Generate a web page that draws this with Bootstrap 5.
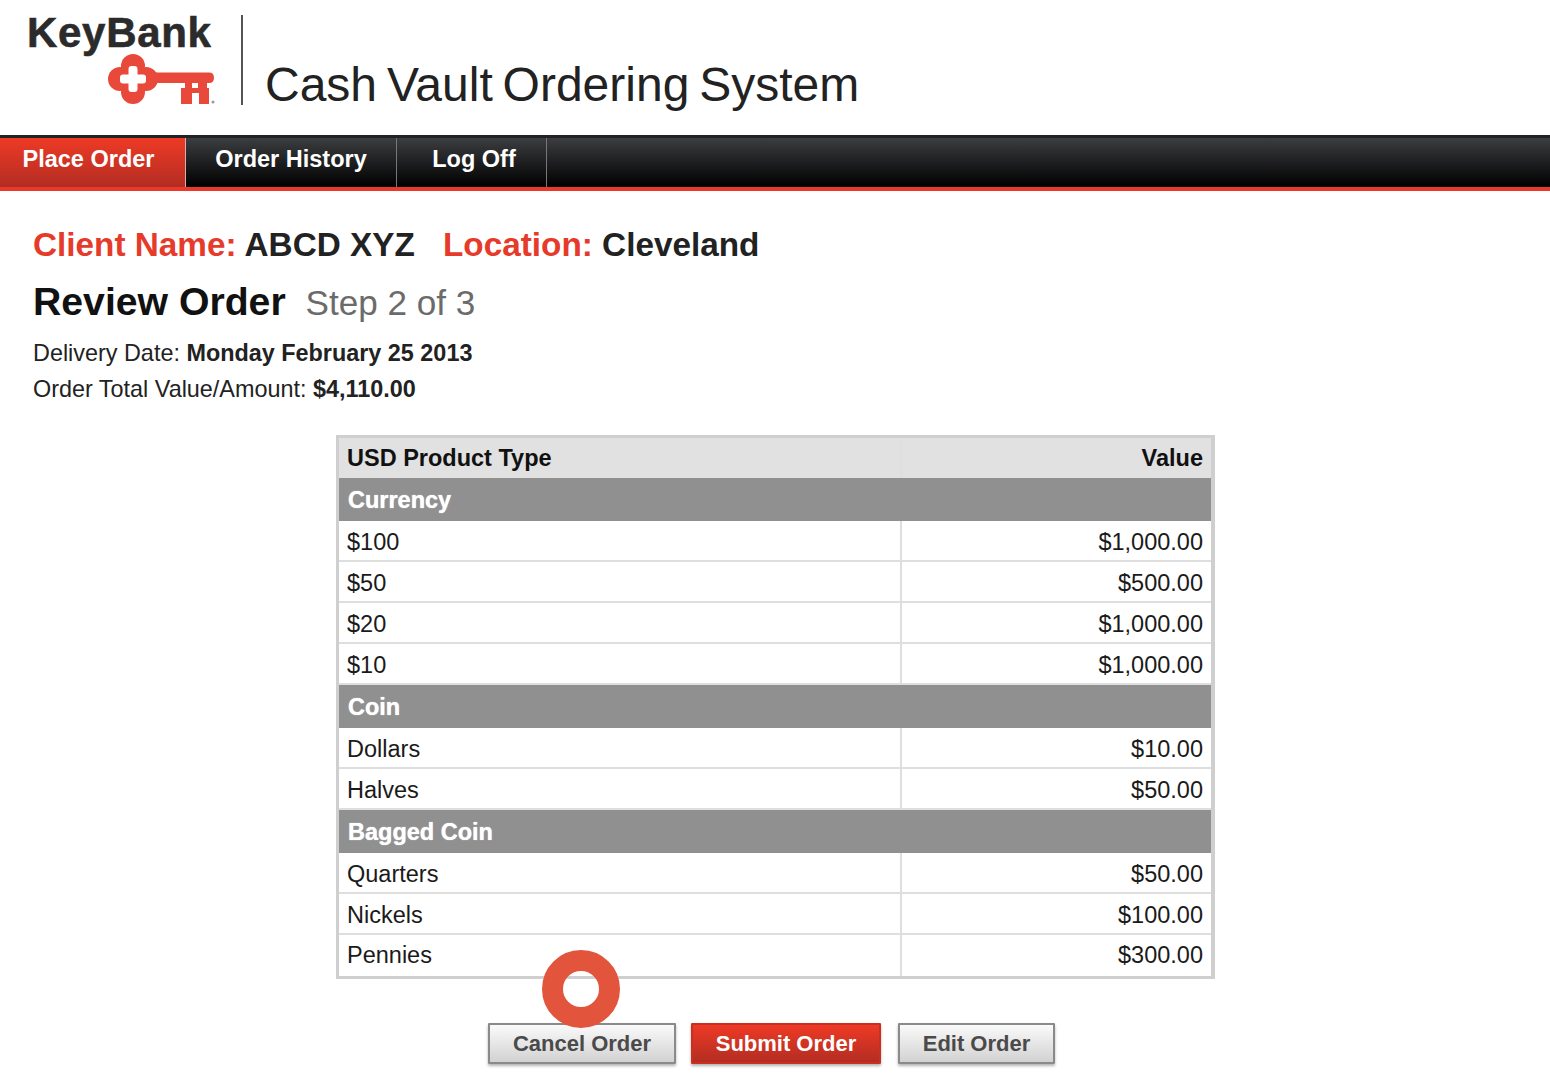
<!DOCTYPE html>
<html lang="en">
  <head>
    <title>Cash Vault Ordering System</title>
    <meta charset="UTF-8" />
    <meta name="viewport" content="width=device-width" />
    <link rel="stylesheet" href="https://cdn.jsdelivr.net/npm/bootstrap@5.3.3/dist/css/bootstrap.min.css" type="text/css" />
    <script src="https://cdn.jsdelivr.net/npm/bootstrap@5.3.3/dist/js/bootstrap.bundle.min.js"></script>
    <style>
      body { font-family: "Liberation Sans", Arial, sans-serif; color: #1a1a1a; background: #fff; }
      .site-head { height: 135px; padding-left: 27px; }
      .logo-box { width: 186px; height: 135px; padding-top: 10px; }
      .logo-word { font-size: 42px; line-height: 46px; font-weight: 700; color: #2b2b2b; letter-spacing: 0.7px; -webkit-text-stroke: 0.6px #2b2b2b; }
      .logo-key { display: block; margin: -3px 0 0 80px; }
      .head-rule { width: 2px; height: 90px; margin: 15px 22px 0 28px; background: #555; }
      .app-title { font-size: 48px; line-height: 54px; padding-top: 58px; color: #222; word-spacing: -3.5px; }
      .tab-bar { height: 56px; border-top: 3px solid #222; border-bottom: 4px solid #e8392a; background: linear-gradient(#3c3d40, #000); }
      .tab-item { height: 49px; line-height: 43px; color: #fff; font-size: 23.5px; font-weight: 700; text-align: center; border-right: 1px solid #777; text-decoration: none; }
      .tab-item.on { background: linear-gradient(#ee3a26, #b32d22); border-right-color: #d9b0a8; }
      .t-place { width: 186px; padding-right: 8px; }
      .t-history { width: 211px; }
      .t-logoff { width: 150px; padding-left: 5px; }
      .page-body { padding: 35px 0 0 33px; }
      .client-line { font-size: 33.3px; line-height: 38px; font-weight: 700; color: #222; margin: 0; }
      .client-line span { color: #e63b2a; }
      .client-line .gap-loc { margin-left: 19px; }
      .review-line { font-size: 39.2px; line-height: 44px; font-weight: 700; color: #111; margin: 16px 0 0; }
      .review-line small { font-size: 35.1px; font-weight: 400; color: #6b6b6b; margin-left: 9px; }
      .info-line { font-size: 23.4px; line-height: 36px; margin: 0; color: #222; }
      .info-line.first { margin-top: 10px; }
      .order-wrap { width: 879px; margin: 28px 0 0 336px; position: relative; }
      .order-table { width: 100%; border: 3px solid #cfcfcf; border-right-width: 4px; border-collapse: separate; border-spacing: 0; font-size: 23.5px; }
      .order-table td, .order-table th { height: 41px; padding: 5px 8px 0 8px; border-bottom: 2px solid #dedede; vertical-align: middle; line-height: 1; }
      .order-table td:first-child, .order-table th:first-child { width: 563px; border-right: 2px solid #dedede; }
      .order-table thead th { height: 40px; padding-top: 2px; background: #e1e1e1; border-bottom: 0; font-weight: 700; color: #111; }
      .order-table tr.grp td { height: 43px; padding-top: 2px; background: #909090; color: #fff; font-weight: 700; border: 0; padding-left: 9px; text-shadow: 0 0 1px #fff; }
      .order-table tr:last-child td { border-bottom: 0; padding-top: 1px; }
      .btn-row { padding: 44px 0 23px 152px; }
      .act-btn { height: 41px; font-size: 22px; font-weight: 700; line-height: 37px; padding: 0; border: 2px solid #8a8a8a; border-radius: 1px; color: #4a4a4a; background: linear-gradient(#fafafa, #d2d2d2); box-shadow: 0 2px 3px rgba(0,0,0,.3); }
      .act-btn.red { color: #fff; border-color: #c9301f; background: linear-gradient(#ee3a26, #b32d22); }
      .b-cancel { width: 188px; }
      .b-submit { width: 190px; margin: 0 17px 0 15px; }
      .b-edit { width: 157px; }
      .tap-ring { position: absolute; left: 206px; top: 515px; width: 78px; height: 78px; border: 21px solid #e2553c; border-radius: 50%; }
    </style>
  </head>
  <body>
    <header class="site-head d-flex">
      <div class="logo-box">
        <div class="logo-word">KeyBank</div>
        <svg class="logo-key" width="110" height="52" viewBox="0 0 110 52" aria-label="KeyBank key">
          <g fill="#e8493a">
            <circle cx="26" cy="13" r="12"/>
            <circle cx="26" cy="39" r="12"/>
            <circle cx="13" cy="26" r="12"/>
            <circle cx="39" cy="26" r="12"/>
            <rect x="14" y="14" width="24" height="24"/>
            <path d="M46 19.500h56q5 0 5 5.250t-5 5.250H46z"/>
            <path d="M78 30h7v5h6v-5h9v5h2v16H92V40h-7v11H74V35h4z"/>
          </g>
          <rect x="13" y="21.500" width="26" height="9" rx="3" fill="#fff"/>
          <rect x="21.500" y="13" width="9" height="26" rx="3" fill="#fff"/>
          <circle cx="106" cy="49" r="1.500" fill="#999"/>
        </svg>
      </div>
      <div class="head-rule"></div>
      <div class="app-title">Cash Vault Ordering System</div>
    </header>

    <nav class="tab-bar d-flex">
      <a class="tab-item t-place on" href="#">Place Order</a>
      <a class="tab-item t-history" href="#">Order History</a>
      <a class="tab-item t-logoff" href="#">Log Off</a>
    </nav>

    <main class="page-body">
      <p class="client-line"><span>Client Name:</span> ABCD XYZ <span class="gap-loc">Location:</span> Cleveland</p>
      <h1 class="review-line">Review Order <small>Step 2 of 3</small></h1>
      <p class="info-line first">Delivery Date: <b>Monday February 25 2013</b></p>
      <p class="info-line">Order Total Value/Amount: <b>$4,110.00</b></p>
    </main>

    <div class="order-wrap">
      <table class="order-table">
        <thead>
          <tr><th>USD Product Type</th><th class="text-end">Value</th></tr>
        </thead>
        <tbody>
          <tr class="grp"><td colspan="2">Currency</td></tr>
          <tr><td>$100</td><td class="text-end">$1,000.00</td></tr>
          <tr><td>$50</td><td class="text-end">$500.00</td></tr>
          <tr><td>$20</td><td class="text-end">$1,000.00</td></tr>
          <tr><td>$10</td><td class="text-end">$1,000.00</td></tr>
          <tr class="grp"><td colspan="2">Coin</td></tr>
          <tr><td>Dollars</td><td class="text-end">$10.00</td></tr>
          <tr><td>Halves</td><td class="text-end">$50.00</td></tr>
          <tr class="grp"><td colspan="2">Bagged Coin</td></tr>
          <tr><td>Quarters</td><td class="text-end">$50.00</td></tr>
          <tr><td>Nickels</td><td class="text-end">$100.00</td></tr>
          <tr><td>Pennies</td><td class="text-end">$300.00</td></tr>
        </tbody>
      </table>
      <div class="btn-row d-flex">
        <button class="act-btn b-cancel" type="button">Cancel Order</button>
        <button class="act-btn red b-submit" type="button">Submit Order</button>
        <button class="act-btn b-edit" type="button">Edit Order</button>
      </div>
      <div class="tap-ring"></div>
    </div>
  </body>
</html>
